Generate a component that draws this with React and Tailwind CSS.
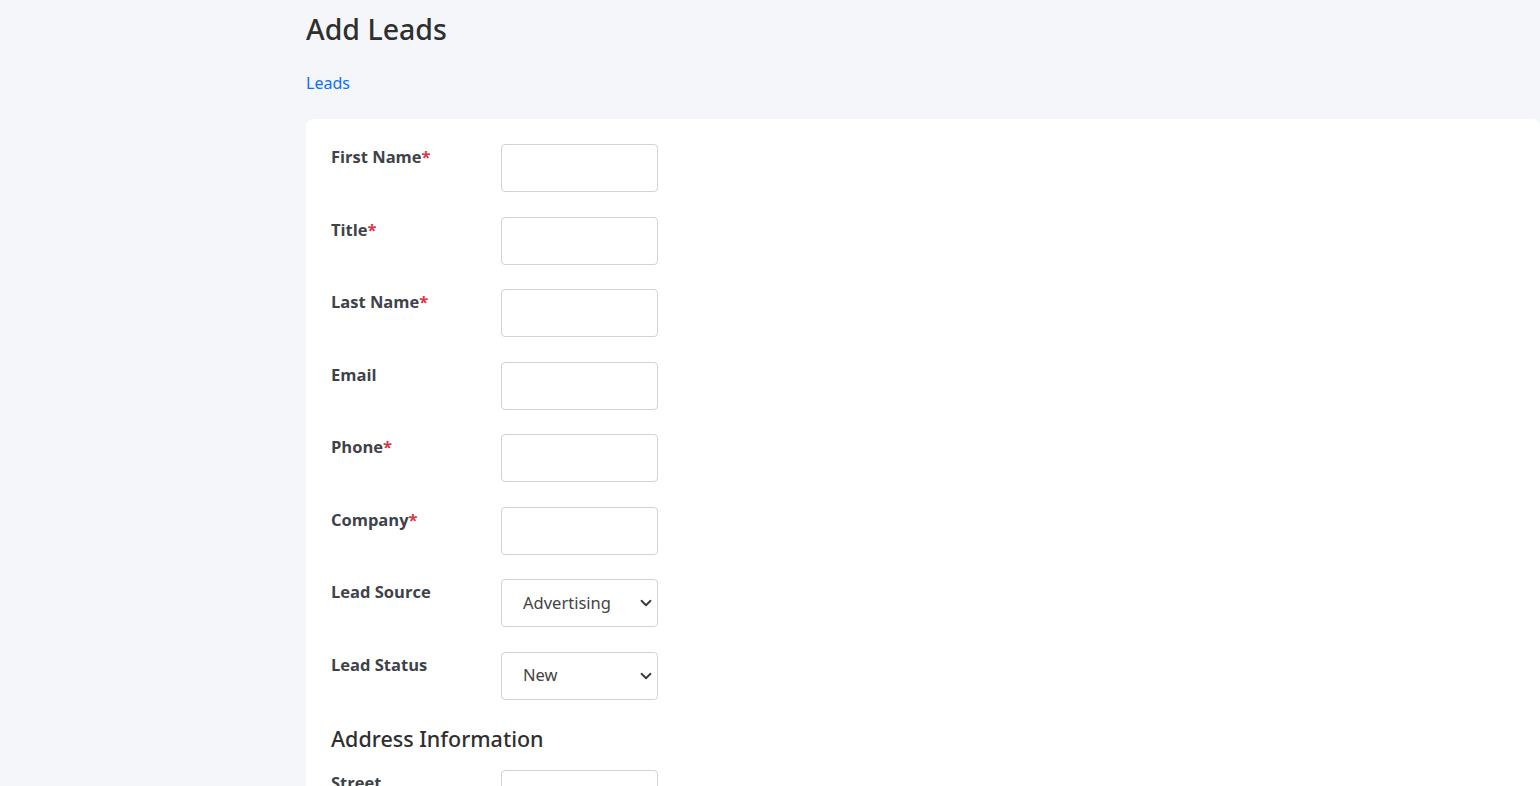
import React, { useState } from "react";

const fields = [
  { name: "firstName", label: "First Name", required: true },
  { name: "title", label: "Title", required: true },
  { name: "lastName", label: "Last Name", required: true },
  { name: "email", label: "Email" },
  { name: "phone", label: "Phone", required: true },
  { name: "company", label: "Company", required: true },
];

const selects = [
  { name: "leadSource", label: "Lead Source", options: ["Advertising", "Web", "Referral", "Cold Call"] },
  { name: "leadStatus", label: "Lead Status", options: ["New", "Contacted", "Qualified", "Lost"] },
];

const labelFont = { fontFamily: "'Open Sans', Lato, sans-serif" };

const Chevron = () => (
  <svg
    className="pointer-events-none absolute right-[6px] top-1/2 -translate-y-1/2"
    width="12"
    height="12"
    viewBox="0 0 16 16"
    fill="none"
    stroke="#343a40"
    strokeWidth="2.4"
    strokeLinecap="round"
    strokeLinejoin="round"
  >
    <path d="M2 5l6 6 6-6" />
  </svg>
);

const Label = ({ text, required }) => (
  <label className="w-[170px] shrink-0 text-[16.5px] leading-[25px] font-bold text-[#3e4349]" style={labelFont}>
    {text}
    {required && <span className="text-[#dc3545]">*</span>}
  </label>
);

const App = () => {
  const [formData, setFormData] = useState({ leadSource: "Advertising", leadStatus: "New" });

  const handleChange = (e) => {
    setFormData({ ...formData, [e.target.name]: e.target.value });
  };

  return (
    <div className="min-h-screen bg-[#f5f6fa] pl-[306px]" style={{ fontFamily: "'Noto Sans', 'Open Sans', sans-serif" }}>
      <h1 className="pt-[8px] text-[28.5px] leading-[42px] font-medium text-[#2f2f2f]">Add Leads</h1>
      <a href="#" className="mt-[21px] block w-fit text-[16px] leading-[24px] text-[#0d6efd]">
        Leads
      </a>
      <div className="mt-[24px] rounded-tl-[8px] rounded-tr-[8px] bg-white pl-[25px] pt-[25px] min-h-[700px]">
        <div className="flex flex-col gap-[24.5px]">
          {fields.map((f) => (
            <div key={f.name} className="flex items-start">
              <Label text={f.label} required={f.required} />
              <input
                type="text"
                name={f.name}
                value={formData[f.name] || ""}
                onChange={handleChange}
                className="h-[48px] w-[157px] rounded-[4px] border border-[#ced4da] bg-white px-3 outline-none"
              />
            </div>
          ))}
          {selects.map((s) => (
            <div key={s.name} className="flex items-start">
              <Label text={s.label} />
              <div className="relative">
                <select
                  name={s.name}
                  value={formData[s.name]}
                  onChange={handleChange}
                  className="h-[48px] w-[157px] appearance-none rounded-[4px] border border-[#ced4da] bg-white pl-[21px] text-[16.5px] text-[#444] outline-none"
                  style={{ fontFamily: "'Noto Sans', 'Open Sans', sans-serif" }}
                >
                  {s.options.map((o) => (
                    <option key={o}>{o}</option>
                  ))}
                </select>
                <Chevron />
              </div>
            </div>
          ))}
        </div>
        <h2 className="mt-[22px] text-[21.5px] leading-[34px] font-medium text-[#2f2f2f]">Address Information</h2>
        <div className="mt-[14px] flex items-start">
          <Label text="Street" />
          <input
            type="text"
            name="street"
            value={formData.street || ""}
            onChange={handleChange}
            className="h-[48px] w-[157px] rounded-[4px] border border-[#ced4da] bg-white px-3 outline-none"
          />
        </div>
      </div>
    </div>
  );
};

export default App;
